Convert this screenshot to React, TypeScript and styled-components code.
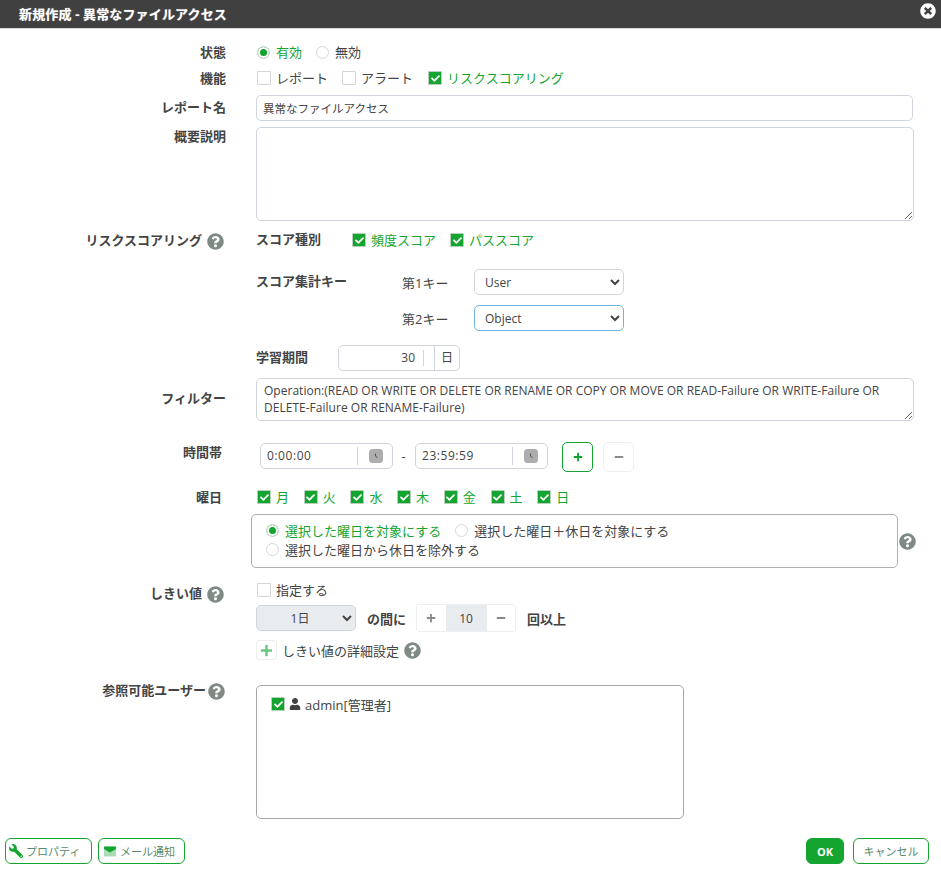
import React from "react";
import styled, { createGlobalStyle } from "styled-components";
import { FaQuestionCircle, FaTimesCircle, FaWrench, FaUser, FaPlus, FaMinus, FaCheck } from "react-icons/fa";

const GREEN = "#13a52f";
const TEXT = "#444444";
const LINE = "#d0d5dd";
const FONT = `"Open Sans", "Noto Sans CJK JP", sans-serif`;

const Global = createGlobalStyle`
  html, body { margin: 0; padding: 0; background: #fff; overflow: hidden; }
  * { box-sizing: border-box; }
  body { font-family: ${FONT}; font-size: 12px; color: ${TEXT}; }
`;

const Dialog = styled.div`
  width: 941px;
  height: 870px;
  display: flex;
  flex-direction: column;
`;
const Header = styled.header`
  height: 29px;
  flex: none;
  background: #404040;
  border-bottom: 1px solid #d8d8d8;
  display: flex;
  align-items: center;
  justify-content: space-between;
  padding: 0 5px 2px 19px;
  color: #fff;
  font-size: 13px;
  font-weight: 700;
  letter-spacing: 0.15px;
  text-shadow: 0 0 1px rgba(255, 255, 255, 0.6);
`;
const CloseIcon = styled(FaTimesCircle)`
  width: 16px;
  height: 16px;
  color: #fff;
  margin-top: -5px;
`;
const Body = styled.main`
  flex: 1;
  padding-top: 13px;
`;
const Row = styled.div<{ $top?: number }>`
  display: grid;
  grid-template-columns: 226px 1fr;
  column-gap: 30px;
  margin-top: ${(p) => p.$top ?? 0}px;
`;
const Label = styled.div<{ $shift?: number; $end?: number; $gap?: number }>`
  font-size: 13px;
  font-weight: 700;
  text-align: right;
  line-height: 20px;
  margin-top: ${(p) => p.$shift ?? 0}px;
  padding-right: ${(p) => p.$end ?? 0}px;
  display: flex;
  justify-content: flex-end;
  align-items: flex-start;
  gap: ${(p) => p.$gap ?? 5}px;
  white-space: nowrap;
`;
const Help = styled(FaQuestionCircle)`
  width: 17px;
  height: 17px;
  color: #7e8a83;
  flex: none;
  margin-top: 3px;
`;
const Content = styled.div`
  min-width: 0;
`;
const Line = styled.div`
  display: flex;
  align-items: center;
  height: 20px;
`;
const Option = styled.label<{ $on?: boolean; $right?: number }>`
  display: inline-flex;
  align-items: center;
  gap: 5px;
  font-size: 13px;
  line-height: 20px;
  white-space: nowrap;
  color: ${(p) => (p.$on ? GREEN : TEXT)};
  margin-right: ${(p) => p.$right ?? 0}px;
`;
const Radio = styled.span<{ $on?: boolean }>`
  width: 13px;
  height: 13px;
  border-radius: 50%;
  margin: 0 1px;
  flex: none;
  border: 1px solid #d6d6d6;
  background: ${(p) => (p.$on ? GREEN : "#fff")};
  box-shadow: ${(p) => (p.$on ? "inset 0 0 0 2px #fff" : "none")};
`;
const Box = styled.span<{ $on?: boolean }>`
  width: 14px;
  height: 14px;
  flex: none;
  margin-left: 1px;
  border-radius: 1px;
  display: inline-flex;
  align-items: center;
  justify-content: center;
  border: 1px solid ${(p) => (p.$on ? "#b9cfbe" : "#d4d4d4")};
  background: ${(p) => (p.$on ? GREEN : "#fff")};
  color: #fff;
  svg { width: 9px; height: 9px; }
`;
const Check = ({ on }: { on?: boolean }) => <Box $on={on}>{on && <FaCheck />}</Box>;

const TextInput = styled.input`
  display: block;
  width: 657px;
  height: 26px;
  border: 1px solid ${LINE};
  border-radius: 5px;
  padding: 0 6px;
  font: 11.5px ${FONT};
  color: ${TEXT};
  outline: none;
`;
const TextArea = styled.textarea<{ $h: number }>`
  display: block;
  width: 658px;
  height: ${(p) => p.$h}px;
  border: 1px solid ${LINE};
  border-radius: 5px;
  padding: 3px 7px;
  font: 12px/17px ${FONT};
  letter-spacing: 0.02px;
  color: ${TEXT};
  outline: none;
`;
const SubRow = styled.div<{ $cols: string; $top?: number }>`
  display: grid;
  grid-template-columns: ${(p) => p.$cols};
  align-items: center;
  margin-top: ${(p) => p.$top ?? 0}px;
`;
const SubLabel = styled.span`
  font-size: 13px;
  line-height: 18px;
  font-weight: 700;
  white-space: nowrap;
  margin-bottom: 2px;
`;
const KeyName = styled.span`
  font-size: 13px;
  white-space: nowrap;
`;
const Select = styled.select<{ $focus?: boolean; $muted?: boolean; $center?: boolean; $w?: number }>`
  width: ${(p) => p.$w ?? 150}px;
  height: 26px;
  border: 1px solid ${(p) => (p.$focus ? "#6fb2de" : LINE)};
  border-radius: 5px;
  background: ${(p) => (p.$muted ? "#e9ecef" : "#fff")};
  padding: 0 6px;
  font: 12px ${FONT};
  color: ${TEXT};
  text-align: ${(p) => (p.$center ? "center" : "left")};
  outline: none;
`;
const DaysField = styled.div`
  width: 122px;
  height: 26px;
  border: 1px solid ${LINE};
  border-radius: 5px;
  display: flex;
  align-items: center;
  font-size: 12px;
`;
const DaysValue = styled.span`
  flex: 1;
  text-align: right;
  padding-right: 8px;
  border-right: 1px solid ${LINE};
  height: 16px;
  line-height: 16px;
  margin-right: 10px;
`;
const DaysUnit = styled.span`
  width: 25px;
  height: 100%;
  border-left: 1px solid ${LINE};
  text-align: center;
  line-height: 24px;
`;
const TimeRow = styled.div`
  display: flex;
  align-items: flex-start;
  padding-left: 4px;
`;
const TimeField = styled.div`
  width: 133px;
  height: 26px;
  margin-top: 1px;
  border: 1px solid ${LINE};
  border-radius: 5px;
  display: flex;
  align-items: center;
  font-size: 12px;
  padding-left: 6px;
`;
const TimeText = styled.span`
  width: 90px;
  letter-spacing: 0.55px;
  padding-bottom: 2px;
`;
const TimeDivider = styled.span`
  width: 1px;
  height: 18px;
  background: ${LINE};
`;
const ClockSvg = styled.svg`
  width: 14px;
  height: 14px;
  margin-left: 11px;
`;
const Clock = () => (
  <ClockSvg viewBox="0 0 14 14">
    <rect width="14" height="14" rx="3.5" fill="#adadad" />
    <path d="M6.5 4.5V7.2L8.5 8.6" fill="none" stroke="#444" strokeWidth="0.9" />
  </ClockSvg>
);
const Dash = styled.span`
  width: 22px;
  height: 26px;
  margin-top: 1px;
  padding-right: 1px;
  line-height: 26px;
  text-align: center;
  font-size: 13px;
`;
const IconButton = styled.button<{ $on?: boolean; $left?: number }>`
  width: 31px;
  height: 30px;
  padding: 0;
  margin-left: ${(p) => p.$left ?? 0}px;
  background: #fff;
  border: 1px solid ${(p) => (p.$on ? GREEN : "#eeeeee")};
  border-radius: 5px;
  color: ${(p) => (p.$on ? GREEN : "#8a8a8a")};
  display: flex;
  align-items: center;
  justify-content: center;
  svg { width: 10px; height: 10px; }
`;
const DayRow = styled.div`
  display: flex;
  height: 20px;
  align-items: center;
  gap: 13.7px;
`;
const ScopeWrap = styled.div`
  display: flex;
  align-items: center;
  gap: 2px;
  margin-left: -5px;
  margin-top: 7px;
`;
const ScopeBox = styled.div`
  width: 647px;
  height: 54px;
  border: 1px solid #b0b0b0;
  border-radius: 5px;
  padding: 6px 0 0 13px;
`;
const ScopeHelp = styled(Help)`
  margin: 0 0 0 -1px;
`;
const ScopeLine = styled.div`
  display: flex;
  height: 19px;
  align-items: center;
`;
const StepRow = styled.div`
  display: flex;
  align-items: center;
  height: 28px;
  margin-top: 4px;
`;
const Inline = styled.span<{ $left: number }>`
  font-size: 13px;
  font-weight: 700;
  margin-left: ${(p) => p.$left}px;
  white-space: nowrap;
`;
const Stepper = styled.div`
  display: flex;
  height: 28px;
  margin-left: 10px;
  border: 1px solid #eeeeee;
  border-radius: 3px;
  width: 100px;
`;
const StepCell = styled.span<{ $value?: boolean }>`
  flex: ${(p) => (p.$value ? "0 0 41px" : "1")};
  display: flex;
  align-items: center;
  justify-content: center;
  font-size: 12px;
  background: ${(p) => (p.$value ? "#e9ecef" : "#fff")};
  color: ${(p) => (p.$value ? TEXT : "#8a8a8a")};
  svg { width: 10px; height: 10px; }
`;
const DetailRow = styled.div`
  display: flex;
  align-items: center;
  height: 20px;
  margin-top: 8px;
  font-size: 13px;
`;
const MiniPlus = styled.span`
  width: 21px;
  height: 20px;
  border: 1px solid #eeeeee;
  border-radius: 3px;
  color: #6cc582;
  display: flex;
  align-items: center;
  justify-content: center;
  margin-right: 5px;
  svg { width: 13px; height: 13px; }
`;
const DetailHelp = styled(Help)`
  margin: 1px 0 0 5px;
`;
const UserBox = styled.div`
  width: 428px;
  height: 134px;
  margin-top: 5px;
  border: 1px solid #a8a8a8;
  border-radius: 5px;
  padding: 8px 0 0 13px;
`;
const UserLine = styled.div`
  display: flex;
  align-items: center;
  height: 20px;
  font-size: 13px;
  gap: 4px;
`;
const UserIcon = styled(FaUser)`
  width: 12px;
  height: 12px;
  color: #404040;
`;
const Footer = styled.footer`
  display: flex;
  justify-content: space-between;
  padding: 0 12px 0 5px;
  margin-top: 19px;
`;
const Group = styled.div`
  display: flex;
  gap: 6px;
`;
const GroupRight = styled(Group)`
  gap: 9px;
`;
const FootButton = styled.button<{ $w: number; $primary?: boolean; $inset?: number }>`
  width: ${(p) => p.$w}px;
  height: 26px;
  padding: 0 0 0 ${(p) => p.$inset ?? 0}px;
  border: 1px solid ${GREEN};
  border-radius: 6px;
  background: ${(p) => (p.$primary ? GREEN : "#fff")};
  color: ${(p) => (p.$primary ? "#fff" : "#568a6b")};
  font: ${(p) => (p.$primary ? 700 : 400)} 11px ${FONT};
  display: flex;
  align-items: center;
  justify-content: ${(p) => (p.$inset ? "flex-start" : "center")};
  gap: 4px;
`;
const Wrench = styled(FaWrench)`
  width: 14px;
  height: 14px;
  color: ${GREEN};
  transform: scaleX(-1);
  margin-right: -1px;
`;
const MailSvg = styled.svg`
  width: 12px;
  height: 12px;
`;
const Mail = () => (
  <MailSvg viewBox="0 0 12 12">
    <rect x="0" y="1.5" width="12" height="10" rx="1" fill="#a9dcb4" />
    <path d="M0 2.5a1 1 0 0 1 1-1h10a1 1 0 0 1 1 1v1.5L6 7.4 0 4z" fill={GREEN} />
  </MailSvg>
);

export default function App() {
  return (
    <Dialog>
      <Global />
      <Header>
        <span>新規作成 - 異常なファイルアクセス</span>
        <CloseIcon />
      </Header>
      <Body>
        <Row>
          <Label>状態</Label>
          <Line>
            <Option $on $right={13}><Radio $on />有効</Option>
            <Option><Radio />無効</Option>
          </Line>
        </Row>
        <Row $top={6}>
          <Label>機能</Label>
          <Line>
            <Option $right={13}><Check />レポート</Option>
            <Option $right={14}><Check />アラート</Option>
            <Option $on><Check on />リスクスコアリング</Option>
          </Line>
        </Row>
        <Row $top={7}>
          <Label $shift={2}>レポート名</Label>
          <Content><TextInput defaultValue="異常なファイルアクセス" /></Content>
        </Row>
        <Row $top={6}>
          <Label $shift={-1}>概要説明</Label>
          <Content><TextArea $h={94} /></Content>
        </Row>
        <Row $top={9}>
          <Label $end={2}>リスクスコアリング<Help /></Label>
          <Content>
            <SubRow $cols="95px 1fr">
              <SubLabel>スコア種別</SubLabel>
              <Line>
                <Option $on $right={13}><Check on />頻度スコア</Option>
                <Option $on><Check on />パススコア</Option>
              </Line>
            </SubRow>
            <SubRow $cols="146px 72px 150px" $top={19}>
              <SubLabel>スコア集計キー</SubLabel>
              <KeyName>第1キー</KeyName>
              <Select defaultValue="User"><option>User</option></Select>
            </SubRow>
            <SubRow $cols="146px 72px 150px" $top={10}>
              <span />
              <KeyName>第2キー</KeyName>
              <Select $focus defaultValue="Object"><option>Object</option></Select>
            </SubRow>
            <SubRow $cols="82px 122px" $top={14}>
              <SubLabel>学習期間</SubLabel>
              <DaysField>
                <DaysValue>30</DaysValue>
                <DaysUnit>日</DaysUnit>
              </DaysField>
            </SubRow>
          </Content>
        </Row>
        <Row $top={7}>
          <Label $shift={10}>フィルター</Label>
          <Content>
            <TextArea
              $h={43}
              defaultValue="Operation:(READ OR WRITE OR DELETE OR RENAME OR COPY OR MOVE OR READ-Failure OR WRITE-Failure OR DELETE-Failure OR RENAME-Failure)"
            />
          </Content>
        </Row>
        <Row $top={21}>
          <Label $end={4}>時間帯</Label>
          <TimeRow>
            <TimeField><TimeText>0:00:00</TimeText><TimeDivider /><Clock /></TimeField>
            <Dash>-</Dash>
            <TimeField><TimeText>23:59:59</TimeText><TimeDivider /><Clock /></TimeField>
            <IconButton $on $left={14}><FaPlus /></IconButton>
            <IconButton $left={10}><FaMinus /></IconButton>
          </TimeRow>
        </Row>
        <Row $top={15}>
          <Label $end={4}>曜日</Label>
          <Content>
            <DayRow>
              {["月", "火", "水", "木", "金", "土", "日"].map((d) => (
                <Option $on key={d}><Check on />{d}</Option>
              ))}
            </DayRow>
            <ScopeWrap>
              <ScopeBox>
                <ScopeLine>
                  <Option $on $right={13}><Radio $on />選択した曜日を対象にする</Option>
                  <Option><Radio />選択した曜日＋休日を対象にする</Option>
                </ScopeLine>
                <ScopeLine>
                  <Option><Radio />選択した曜日から休日を除外する</Option>
                </ScopeLine>
              </ScopeBox>
              <ScopeHelp />
            </ScopeWrap>
          </Content>
        </Row>
        <Row $top={12}>
          <Label $end={2} $shift={3}>しきい値<Help /></Label>
          <Content>
            <Line><Option><Check />指定する</Option></Line>
            <StepRow>
              <Select $w={100} $muted $center defaultValue="1日"><option>1日</option></Select>
              <Inline $left={11}>の間に</Inline>
              <Stepper>
                <StepCell><FaPlus /></StepCell>
                <StepCell $value>10</StepCell>
                <StepCell><FaMinus /></StepCell>
              </Stepper>
              <Inline $left={11}>回以上</Inline>
            </StepRow>
            <DetailRow>
              <MiniPlus><FaPlus /></MiniPlus>
              しきい値の詳細設定
              <DetailHelp />
            </DetailRow>
          </Content>
        </Row>
        <Row $top={20}>
          <Label $end={1} $gap={2}>参照可能ユーザー<Help /></Label>
          <UserBox>
            <UserLine><Check on /><UserIcon />admin[管理者]</UserLine>
          </UserBox>
        </Row>
        <Footer>
          <Group>
            <FootButton $w={87} $inset={3}><Wrench />プロパティ</FootButton>
            <FootButton $w={87} $inset={5}><Mail />メール通知</FootButton>
          </Group>
          <GroupRight>
            <FootButton $w={38} $primary>OK</FootButton>
            <FootButton $w={76}>キャンセル</FootButton>
          </GroupRight>
        </Footer>
      </Body>
    </Dialog>
  );
}
